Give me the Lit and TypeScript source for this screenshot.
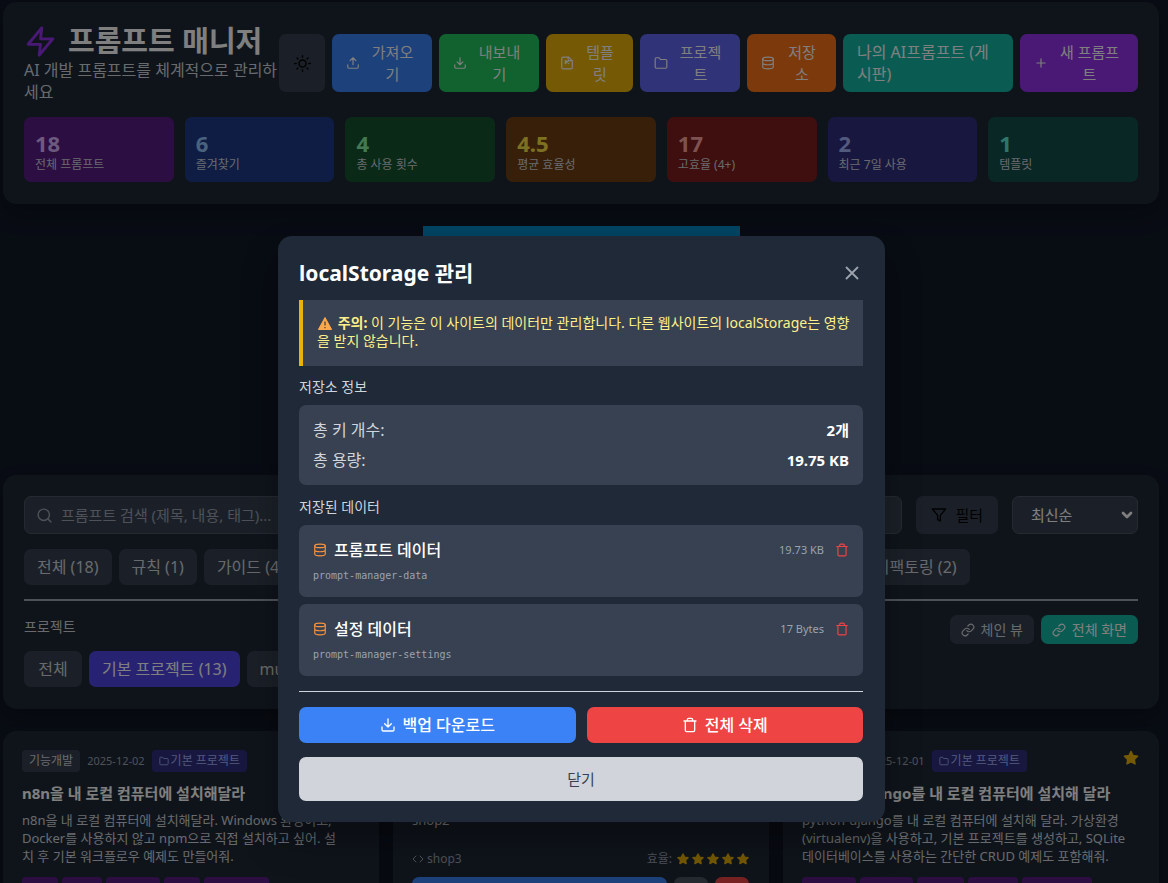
import { LitElement, html, css, svg, nothing } from "lit";
import { customElement, property, state } from "lit/decorators.js";
import { classMap } from "lit/directives/class-map.js";

const shapes: Record<string, unknown> = {
  zap: svg`<path d="M13 2 3 14h9l-1 8 10-12h-9l1-8z"/>`,
  sun: svg`<circle cx="12" cy="12" r="5"/><path d="M12 1v2M12 21v2M4.2 4.2l1.4 1.4M18.4 18.4l1.4 1.4M1 12h2M21 12h2M4.2 19.8l1.4-1.4M18.4 5.6l1.4-1.4"/>`,
  upload: svg`<path d="M21 15v4a2 2 0 0 1-2 2H5a2 2 0 0 1-2-2v-4M17 8l-5-5-5 5M12 3v12"/>`,
  download: svg`<path d="M21 15v4a2 2 0 0 1-2 2H5a2 2 0 0 1-2-2v-4M7 10l5 5 5-5M12 15V3"/>`,
  file: svg`<path d="M15 2H5a2 2 0 0 0-2 2v16a2 2 0 0 0 2 2h14a2 2 0 0 0 2-2V8zM14 2v6h6M9 8v5M9 13l5-4M10 8l5 5"/>`,
  folder: svg`<path d="M22 19a2 2 0 0 1-2 2H4a2 2 0 0 1-2-2V5a2 2 0 0 1 2-2h5l2 3h9a2 2 0 0 1 2 2z"/>`,
  database: svg`<ellipse cx="12" cy="5" rx="9" ry="3"/><path d="M21 12c0 1.66-4 3-9 3s-9-1.34-9-3M3 5v14c0 1.66 4 3 9 3s9-1.34 9-3V5"/>`,
  plus: svg`<path d="M12 5v14M5 12h14"/>`,
  close: svg`<path d="M18 6 6 18M6 6l12 12"/>`,
  search: svg`<circle cx="11" cy="11" r="8"/><path d="m21 21-4.35-4.35"/>`,
  filter: svg`<path d="M22 3H2l8 9.46V19l4 2v-8.54z"/>`,
  link: svg`<path d="M10 13a5 5 0 0 0 7.54.54l3-3a5 5 0 0 0-7.07-7.07l-1.72 1.71M14 11a5 5 0 0 0-7.54-.54l-3 3a5 5 0 0 0 7.07 7.07l1.71-1.71"/>`,
  trash: svg`<path d="M3 6h18M19 6v14a2 2 0 0 1-2 2H7a2 2 0 0 1-2-2V6m3 0V4a2 2 0 0 1 2-2h4a2 2 0 0 1 2 2v2"/>`,
  code: svg`<path d="m16 18 6-6-6-6M8 6l-6 6 6 6"/>`,
  chevron: svg`<path d="m6 9 6 6 6-6"/>`,
  star: svg`<path fill="currentColor" d="m12 2 3.09 6.26L22 9.27l-5 4.87 1.18 6.88L12 17.77l-6.18 3.25L7 14.14 2 9.27l6.91-1.01z"/>`,
};

const icon = (name: string, size = 14, weight = 2) => html`<svg
  class="icon"
  aria-hidden="true"
  width=${size}
  height=${size}
  viewBox="0 0 24 24"
  fill="none"
  stroke="currentColor"
  stroke-width=${weight}
  stroke-linecap="round"
  stroke-linejoin="round"
>${shapes[name]}</svg>`;

const base = css`
  * {
    box-sizing: border-box;
  }
  h1, h2, h3, p, ul {
    margin: 0;
    padding: 0;
  }
  ul {
    list-style: none;
  }
  button, input, select {
    font: inherit;
    color: inherit;
    border: 0;
    margin: 0;
    padding: 0;
    background: none;
  }
  button {
    cursor: pointer;
  }
  a {
    color: inherit;
    text-decoration: none;
  }
  .icon {
    display: block;
    flex: none;
  }
`;

interface PromptCard {
  category: string;
  date: string;
  title: string;
  text: string;
  project: string;
  favorite?: boolean;
  tags?: string[];
  source?: string;
}

@customElement("prompt-card")
export class PromptCardElement extends LitElement {
  @property({ attribute: false }) card!: PromptCard;

  static styles = [
    base,
    css`
      :host {
        display: block;
        box-sizing: border-box;
        min-height: 240px;
        padding: 19px 20px 19px 19px;
        border-radius: 14px;
        background: #1f2937;
        color: #d1d5db;
        box-shadow: 0 10px 20px rgba(0, 0, 0, 0.2);
      }
      .meta {
        display: flex;
        align-items: center;
        gap: 7px;
        height: 22px;
        font-size: 12px;
        line-height: 16px;
      }
      .category, .project {
        display: flex;
        align-items: center;
        gap: 2px;
        height: 22px;
        padding: 0 7px;
        border-radius: 4px;
        background: #374151;
        white-space: nowrap;
      }
      .project {
        background: #312e81;
        color: #a5b4fc;
      }
      .date {
        color: #9ca3af;
        font-size: 11px;
      }
      .favorite {
        margin-left: auto;
        color: #eab308;
        align-self: flex-start;
      }
      .title {
        margin-top: 10px;
        font-size: 15px;
        line-height: 22px;
        font-weight: 700;
        color: #fff;
      }
      .text {
        margin-top: 7px;
        padding-right: 12px;
        font-size: 13px;
        line-height: 18px;
      }
      .tags {
        display: flex;
        gap: 4px;
        margin-top: 12px;
      }
      .tag {
        padding: 6px 7px;
        border-radius: 4px;
        background: #581c87;
        color: #d8b4fe;
        font-size: 12px;
        line-height: 16px;
      }
      .usage {
        display: flex;
        align-items: center;
        justify-content: space-between;
        margin-top: 21px;
        height: 18px;
        font-size: 12px;
        color: #9ca3af;
      }
      .source, .rating {
        display: flex;
        align-items: center;
        gap: 3px;
      }
      .rating {
        gap: 5px;
      }
      .stars {
        display: flex;
        gap: 3px;
        color: #eab308;
      }
      .actions {
        display: flex;
        gap: 7px;
        margin-top: 9px;
      }
      .action {
        display: flex;
        align-items: center;
        justify-content: center;
        width: 34px;
        height: 34px;
        border-radius: 7px;
        background: #4b5563;
        color: #fff;
        font-size: 14px;
      }
      .action.copy {
        flex: 1;
        background: #3b82f6;
      }
      .action.remove {
        background: #ef4444;
      }
    `,
  ];

  render() {
    const c = this.card;
    return html`
      <div class="meta">
        <span class="category">${c.category}</span>
        <span class="date">${c.date}</span>
        <span class="project">${icon("folder", 10)}${c.project}</span>
        ${c.favorite ? html`<span class="favorite">${icon("star", 16, 2)}</span>` : nothing}
      </div>
      <h3 class="title">${c.title}</h3>
      <p class="text">${c.text}</p>
      ${c.tags
        ? html`<div class="tags">${c.tags.map((t) => html`<span class="tag">${t}</span>`)}</div>`
        : nothing}
      ${c.source
        ? html`
            <div class="usage">
              <span class="source">${icon("code", 12)}${c.source}</span>
              <span class="rating"
                >효율:
                <span class="stars">${[1, 2, 3, 4, 5].map(() => icon("star", 12, 3))}</span></span
              >
            </div>
            <div class="actions">
              <button class="action copy">복사</button>
              <button class="action" aria-label="보기">${icon("code")}</button>
              <button class="action remove" aria-label="삭제">${icon("trash")}</button>
            </div>
          `
        : nothing}
    `;
  }
}

@customElement("storage-dialog")
export class StorageDialog extends LitElement {
  static styles = [
    base,
    css`
      :host {
        display: block;
        box-sizing: border-box;
        width: 100%;
        max-width: 607px;
        padding: 21px 22px 21px 21px;
        border-radius: 14px;
        background: #1f2937;
        color: #d1d5db;
        box-shadow: 0 20px 36px rgba(0, 0, 0, 0.3);
      }
      .head {
        display: flex;
        align-items: center;
        justify-content: space-between;
        height: 32px;
        margin-bottom: 11px;
      }
      .heading {
        font-size: 21px;
        line-height: 28px;
        font-weight: 700;
        color: #fff;
      }
      .close-icon {
        color: #9ca3af;
      }
      .warning {
        padding: 14px 10px 16px 14px;
        border-left: 4px solid #eab308;
        background: #374151;
        color: #fef08a;
        font-size: 14px;
        line-height: 18px;
      }
      .warning-icon {
        display: inline-block;
        vertical-align: -2px;
        margin: 0 2px 0 1px;
      }
      .label {
        margin: 12px 0 9px;
        font-size: 14px;
        line-height: 18px;
        font-weight: 400;
      }
      .box {
        padding: 14px;
        border-radius: 7px;
        background: #374151;
      }
      .totals {
        display: grid;
        gap: 8px;
        margin-bottom: 13px;
      }
      .row {
        display: flex;
        align-items: center;
        justify-content: space-between;
        font-size: 16px;
        line-height: 22px;
      }
      .total {
        font-size: 15px;
        font-weight: 700;
        color: #fff;
      }
      .entries {
        display: grid;
        gap: 7px;
      }
      .name, .side {
        display: flex;
        align-items: center;
        gap: 7px;
      }
      .name {
        color: #fff;
        font-weight: 500;
      }
      .name .icon {
        color: #fb923c;
      }
      .side {
        gap: 11px;
        color: #9ca3af;
        font-size: 11px;
      }
      .delete {
        color: #ef4444;
      }
      .key {
        margin-top: 7px;
        font-family: "DejaVu Sans Mono", monospace;
        font-size: 10px;
        line-height: 15px;
        color: #9ca3af;
      }
      .actions {
        display: grid;
        grid-template-columns: 1fr 1fr;
        gap: 14px 11px;
        margin-top: 15px;
        padding-top: 15px;
        border-top: 1px solid #d1d5db;
      }
      .btn {
        display: flex;
        align-items: center;
        justify-content: center;
        gap: 7px;
        height: 36px;
        border-radius: 7px;
        color: #fff;
        font-size: 16px;
        font-weight: 500;
        line-height: 22px;
      }
      .backup {
        background: #3b82f6;
      }
      .clear {
        background: #ef4444;
      }
      .dismiss {
        grid-column: 1 / -1;
        height: 44px;
        background: #d1d5db;
        color: #374151;
        font-size: 15px;
        font-weight: 400;
      }
    `,
  ];

  private entries = [
    { name: "프롬프트 데이터", key: "prompt-manager-data", size: "19.73 KB" },
    { name: "설정 데이터", key: "prompt-manager-settings", size: "17 Bytes" },
  ];

  private dismiss() {
    this.dispatchEvent(new CustomEvent("dismiss"));
  }

  render() {
    return html`
      <div class="head">
        <h2 class="heading">localStorage 관리</h2>
        <button class="close-icon" aria-label="닫기" @click=${this.dismiss}>${icon("close", 22)}</button>
      </div>
      <p class="warning">
        <svg class="warning-icon" width="14" height="13" viewBox="0 0 14 13" aria-hidden="true">
          <path d="M7 0.5 13.6 12.5H0.4z" fill="#fba94c" stroke="#fba94c" stroke-linejoin="round" />
          <path d="M7 4.5v4M7 10v1.2" stroke="#5b4a3a" stroke-width="1.4" />
        </svg>
        <strong>주의:</strong> 이 기능은 이 사이트의 데이터만 관리합니다. 다른 웹사이트의 localStorage는 영향을 받지 않습니다.
      </p>
      <h3 class="label">저장소 정보</h3>
      <div class="box totals">
        <div class="row"><span>총 키 개수:</span><span class="total">2개</span></div>
        <div class="row"><span>총 용량:</span><span class="total">19.75 KB</span></div>
      </div>
      <h3 class="label">저장된 데이터</h3>
      <ul class="entries">
        ${this.entries.map(
          (e) => html`<li class="box">
            <div class="row">
              <span class="name">${icon("database")}${e.name}</span>
              <span class="side">
                ${e.size}
                <button class="delete" aria-label="${e.name} 삭제">${icon("trash")}</button>
              </span>
            </div>
            <p class="key">${e.key}</p>
          </li>`
        )}
      </ul>
      <div class="actions">
        <button class="btn backup">${icon("download", 16)}백업 다운로드</button>
        <button class="btn clear">${icon("trash", 16)}전체 삭제</button>
        <button class="btn dismiss" @click=${this.dismiss}>닫기</button>
      </div>
    `;
  }
}

@customElement("app-root")
export class AppRoot extends LitElement {
  @state() private dialogOpen = true;
  @state() private project = "기본 프로젝트 (13)";

  static styles = [
    base,
    css`
      :host {
        display: block;
        position: relative;
        height: 100vh;
        overflow: hidden;
        background: #111827;
        color: #fff;
        font-family: "Noto Sans", "Noto Sans CJK KR", sans-serif;
        font-size: 15px;
        line-height: 22px;
      }
      .page {
        display: grid;
        gap: 22px;
        padding: 2px 9px 0 3px;
      }
      .panel {
        padding: 21px 21px 22px;
        border-radius: 14px;
        background: #1f2937;
        box-shadow: 0 10px 20px rgba(0, 0, 0, 0.25);
      }
      .top {
        display: flex;
        align-items: center;
        gap: 7px;
        margin-bottom: 14px;
      }
      .brand {
        flex: 1;
        min-width: 0;
        margin-right: -7px;
      }
      .brand-title {
        display: flex;
        align-items: center;
        gap: 11px;
        font-size: 29px;
        line-height: 36px;
        font-weight: 700;
        white-space: nowrap;
      }
      .brand-title .icon {
        color: #9333ea;
      }
      .tagline {
        font-size: 16px;
        color: #d1d5db;
      }
      .tool {
        flex: none;
        display: flex;
        align-items: center;
        justify-content: center;
        gap: 7px;
        width: 100px;
        height: 58px;
        padding: 0 14px;
        border-radius: 7px;
        text-align: center;
      }
      .tool-text {
        flex: 1;
      }
      .theme { width: 46px; background: #374151; color: #000; }
      .blue { background: #3b82f6; }
      .green { background: #22c55e; }
      .yellow { width: 87px; background: #eab308; }
      .indigo { background: #6366f1; }
      .orange { width: 89px; background: #f97316; }
      .teal { width: 170px; background: #14b8a6; text-align: left; font-size: 16px; }
      .purple { width: 118px; background: #9333ea; }
      .stats {
        display: grid;
        grid-template-columns: repeat(7, 1fr);
        gap: 11px;
      }
      .stat {
        padding: 13px 11px 9px;
        border-radius: 7px;
      }
      .stat-value {
        font-size: 22px;
        line-height: 26px;
        font-weight: 700;
      }
      .stat-label {
        font-size: 12px;
        line-height: 17px;
        color: #d1d5db;
      }
      .s-purple { background: #581c87; color: #d8b4fe; }
      .s-blue { background: #1e3a8a; color: #93c5fd; }
      .s-green { background: #14532d; color: #86efac; }
      .s-yellow { background: #713f12; color: #fde047; }
      .s-red { background: #7f1d1d; color: #fca5a5; }
      .s-indigo { background: #312e81; color: #a5b4fc; }
      .s-teal { background: #134e4a; color: #5eead4; }
      .banner {
        justify-self: center;
        width: 317px;
        height: 227px;
        background: #0088c4;
      }
      .search-row {
        display: flex;
        gap: 14px;
        height: 38px;
      }
      .search {
        flex: 1;
        display: flex;
        align-items: center;
        gap: 8px;
        padding: 0 11px;
        border: 1px solid #4b5563;
        border-radius: 7px;
        background: #374151;
        color: #9ca3af;
      }
      .search-input {
        flex: 1;
        min-width: 0;
        color: #fff;
        outline: none;
      }
      .search-input::placeholder {
        color: #9ca3af;
        opacity: 1;
      }
      .filter {
        display: flex;
        align-items: center;
        gap: 8px;
        padding: 0 15px;
        border-radius: 7px;
        background: #374151;
        color: #000;
      }
      .sort {
        position: relative;
        width: 126px;
      }
      .sort-select {
        appearance: none;
        width: 100%;
        height: 100%;
        padding: 0 18px;
        border: 1px solid #4b5563;
        border-radius: 7px;
        background: #374151;
      }
      .sort .icon {
        position: absolute;
        right: 3px;
        top: 11px;
        pointer-events: none;
      }
      .chips {
        display: flex;
        gap: 7px;
        margin-top: 15px;
      }
      .chip {
        min-width: 58px;
        height: 36px;
        padding: 0 13px;
        border-radius: 7px;
        background: #374151;
        color: #d1d5db;
        font-size: 16px;
        white-space: nowrap;
      }
      .chip.active {
        background: #4f46e5;
        color: #fff;
      }
      .projects {
        margin-top: 14px;
        padding-top: 14px;
        border-top: 2px solid #9ca3af;
      }
      .projects-head {
        display: flex;
        align-items: flex-start;
        gap: 7px;
      }
      .projects-title {
        flex: 1;
        font-size: 14px;
        line-height: 24px;
        font-weight: 400;
        color: #d1d5db;
      }
      .view {
        display: flex;
        align-items: center;
        gap: 6px;
        height: 29px;
        padding: 0 11px;
        border-radius: 7px;
        background: #374151;
        color: #d1d5db;
        font-size: 14px;
      }
      .view.active {
        background: #14b8a6;
        color: #fff;
      }
      .projects .chips {
        margin-top: 7px;
      }
      .cards {
        display: grid;
        grid-template-columns: repeat(3, minmax(0, 1fr));
        gap: 14px;
      }
      .overlay {
        position: absolute;
        inset: 0;
        display: flex;
        align-items: flex-start;
        justify-content: center;
        padding: 236px 8px 0 3px;
        background: rgba(0, 0, 0, 0.5);
      }
    `,
  ];

  private tools = [
    { tone: "blue", icon: "upload", text: "가져오기" },
    { tone: "green", icon: "download", text: "내보내기" },
    { tone: "yellow", icon: "file", text: "템플릿" },
    { tone: "indigo", icon: "folder", text: "프로젝트" },
    { tone: "orange", icon: "database", text: "저장소" },
  ];

  private stats = [
    { tone: "purple", value: "18", label: "전체 프롬프트" },
    { tone: "blue", value: "6", label: "즐겨찾기" },
    { tone: "green", value: "4", label: "총 사용 횟수" },
    { tone: "yellow", value: "4.5", label: "평균 효율성" },
    { tone: "red", value: "17", label: "고효율 (4+)" },
    { tone: "indigo", value: "2", label: "최근 7일 사용" },
    { tone: "teal", value: "1", label: "템플릿" },
  ];

  private categories = [
    "전체 (18)",
    "규칙 (1)",
    "가이드 (4)",
    "기능개발 (6)",
    "버그수정 (1)",
    "테스트 (10)",
    "문서 작성 (2)",
    "최적화 (1)",
    "리팩토링 (2)",
  ];

  private projects = ["전체", "기본 프로젝트 (13)", "multi-shop (5)"];

  private cards: PromptCard[] = [
    {
      category: "기능개발",
      date: "2025-12-02",
      project: "기본 프로젝트",
      title: "n8n을 내 로컬 컴퓨터에 설치해달라",
      text: "n8n을 내 로컬 컴퓨터에 설치해달라. Windows 환경이고, Docker를 사용하지 않고 npm으로 직접 설치하고 싶어. 설치 후 기본 워크플로우 예제도 만들어줘.",
      tags: ["n8n", "npm", "Docker", "설치", "workflow"],
    },
    {
      category: "기능개발",
      date: "2025-12-01",
      project: "multi-shop",
      title: "shop",
      text: "shop2",
      source: "shop3",
    },
    {
      category: "기능개발",
      date: "2025-12-01",
      project: "기본 프로젝트",
      title: "python-django를 내 로컬 컴퓨터에 설치해 달라",
      text: "python-django를 내 로컬 컴퓨터에 설치해 달라. 가상환경(virtualenv)을 사용하고, 기본 프로젝트를 생성하고, SQLite 데이터베이스를 사용하는 간단한 CRUD 예제도 포함해줘.",
      favorite: true,
      tags: ["python", "django", "CRUD", "SQLite", "virtualenv"],
    },
  ];

  render() {
    return html`
      <main class="page">
        <header class="panel">
          <div class="top">
            <div class="brand">
              <h1 class="brand-title">${icon("zap", 33)}프롬프트 매니저</h1>
              <p class="tagline">AI 개발 프롬프트를 체계적으로 관리하세요</p>
            </div>
            <button class="tool theme" aria-label="테마 전환">${icon("sun", 17)}</button>
            ${this.tools.map(
              (t) => html`<button
                class="tool ${t.tone}"
                @click=${() => t.icon === "database" && (this.dialogOpen = true)}
              >
                ${icon(t.icon)}<span class="tool-text">${t.text}</span>
              </button>`
            )}
            <a class="tool teal" href="#board">나의 AI프롬프트 (게시판)</a>
            <button class="tool purple">${icon("plus")}<span class="tool-text">새 프롬프트</span></button>
          </div>
          <div class="stats">
            ${this.stats.map(
              (s) => html`<div class="stat s-${s.tone}">
                <div class="stat-value">${s.value}</div>
                <div class="stat-label">${s.label}</div>
              </div>`
            )}
          </div>
        </header>

        <div class="banner"></div>

        <section class="panel">
          <div class="search-row">
            <label class="search">
              ${icon("search", 17)}
              <input class="search-input" type="text" aria-label="프롬프트 검색" placeholder="프롬프트 검색 (제목, 내용, 태그)..." />
            </label>
            <button class="filter">${icon("filter", 16)}필터</button>
            <div class="sort">
              <select class="sort-select" aria-label="정렬">
                <option>최신순</option>
                <option>오래된순</option>
                <option>효율순</option>
              </select>
              ${icon("chevron", 16, 4)}
            </div>
          </div>
          <div class="chips">
            ${this.categories.map((c) => html`<button class="chip">${c}</button>`)}
          </div>
          <div class="projects">
            <div class="projects-head">
              <h2 class="projects-title">프로젝트</h2>
              <button class="view">${icon("link")}체인 뷰</button>
              <button class="view active">${icon("link")}전체 화면</button>
            </div>
            <div class="chips">
              ${this.projects.map(
                (p) => html`<button
                  class=${classMap({ chip: true, active: p === this.project })}
                  @click=${() => (this.project = p)}
                >
                  ${p}
                </button>`
              )}
            </div>
          </div>
        </section>

        <section class="cards">
          ${this.cards.map((c) => html`<prompt-card .card=${c}></prompt-card>`)}
        </section>
      </main>
      ${this.dialogOpen
        ? html`<div class="overlay">
            <storage-dialog
              role="dialog"
              aria-modal="true"
              aria-label="localStorage 관리"
              @dismiss=${() => (this.dialogOpen = false)}
            ></storage-dialog>
          </div>`
        : nothing}
    `;
  }
}
